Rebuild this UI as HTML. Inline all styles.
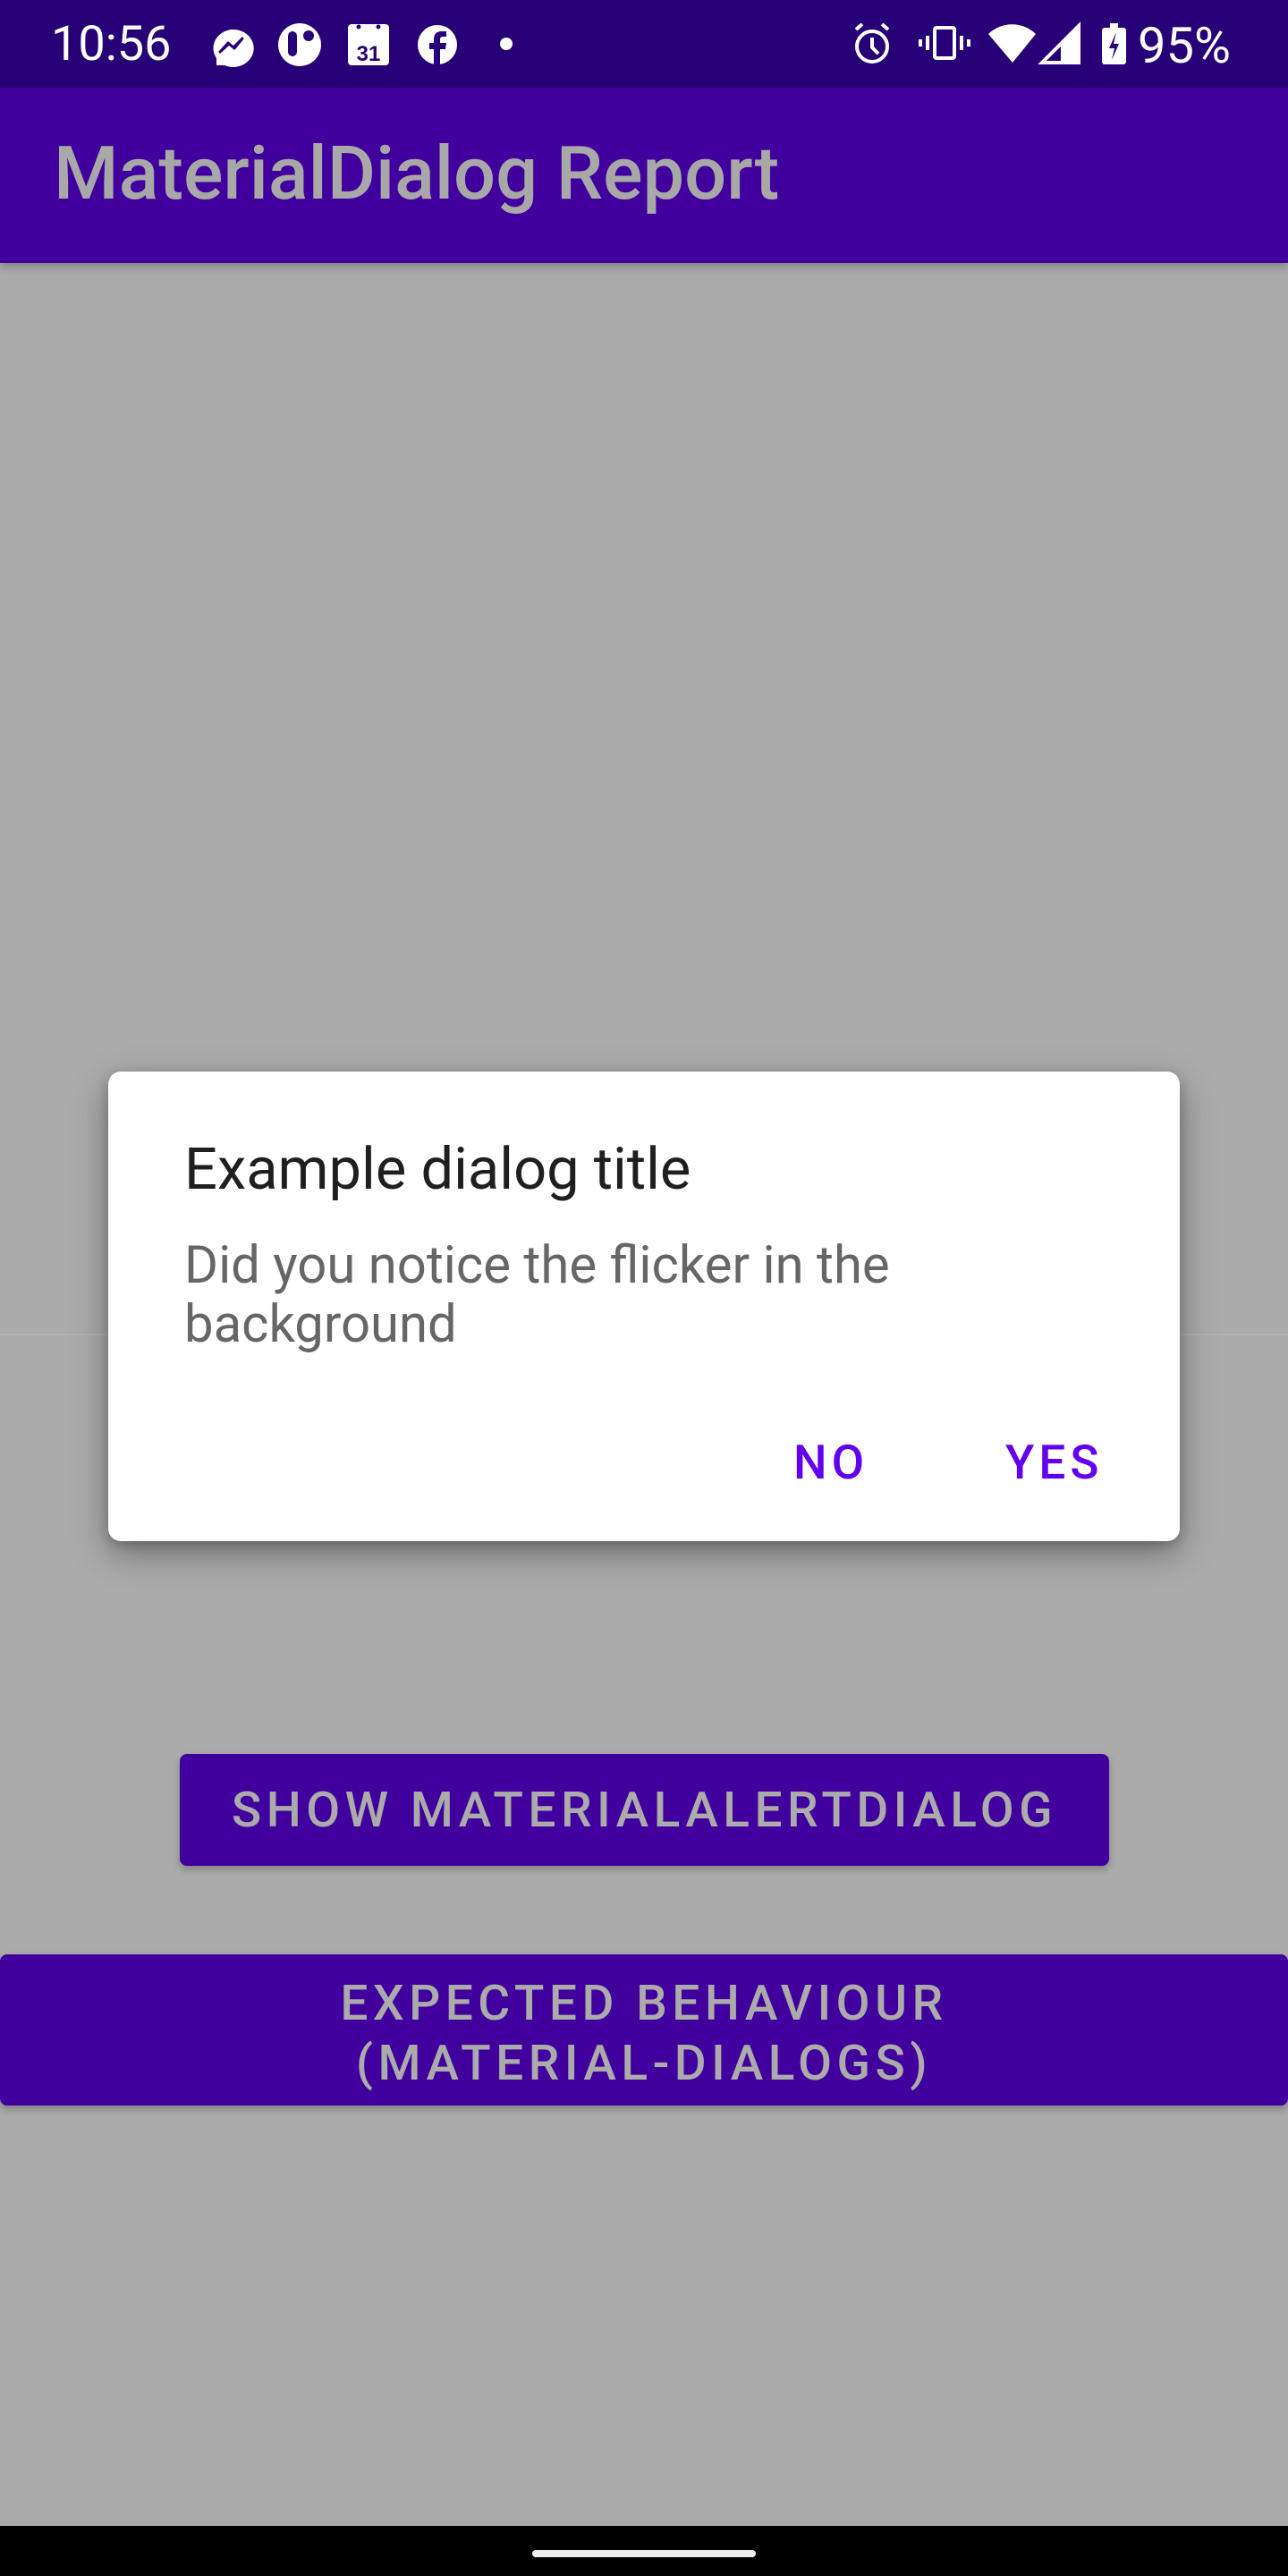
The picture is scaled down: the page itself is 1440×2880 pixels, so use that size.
<!DOCTYPE html>
<html><head><meta charset="utf-8"><style>
*{margin:0;padding:0;box-sizing:border-box}
body{width:1440px;height:2880px;background:#ababab;position:relative;overflow:hidden;font-family:"Roboto","Liberation Sans",sans-serif}
.abs{position:absolute}
#sb{left:0;top:0;width:1440px;height:98px;background:#270077}
#ab{left:0;top:98px;width:1440px;height:196px;background:#41009e;box-shadow:0 4px 10px rgba(0,0,0,.25)}
.t{white-space:nowrap;line-height:1}
#dlg{left:121px;top:1198px;width:1198px;height:525px;background:#fff;border-radius:14px;box-shadow:0 14px 40px rgba(0,0,0,.35),0 4px 12px rgba(0,0,0,.2)}
.btn{background:#41009e}
</style></head><body>
<div id="sb" class="abs"></div>
<div class="abs t" style="left:57px;top:23px;font-size:54px;color:#fff">10:56</div>
<svg class="abs" style="left:0;top:0" width="1440" height="98" viewBox="0 0 1440 98">
 <g fill="#fff">
  <path d="M259 33a23 21 0 1 1 -8 40l-9 0 0-8a23 21 0 0 1 17-32z"/>
  <circle cx="335" cy="50" r="24"/>
  <rect x="389" y="27" width="46" height="46" rx="4"/>
  <circle cx="489" cy="50" r="22"/>
  <circle cx="566" cy="49" r="7"/>
 </g>
 <path d="M246 58l9-10 6 5 10-10-9 11-6-5z" fill="#270077" stroke="#270077" stroke-width="3" stroke-linejoin="round"/>
 <rect x="322" y="35" width="10" height="28" rx="5" fill="#270077"/>
 <circle cx="345" cy="40" r="6" fill="#270077"/>
 <circle cx="401" cy="30" r="2.5" fill="#270077"/><circle cx="423" cy="30" r="2.5" fill="#270077"/>
 <text x="412" y="68" font-size="24" font-weight="bold" fill="#270077" text-anchor="middle" font-family="Liberation Sans">31</text>
 <path d="M492 72V55h6l1-7h-7v-4c0-2 1-3 3-3h4v-6h-5c-6 0-9 3-9 9v4h-5v7h5v17z" fill="#270077"/>
 <g fill="none" stroke="#fff" stroke-width="4">
  <circle cx="975" cy="52" r="17"/><path d="M975 42v11l7 7M957 33l7-6M993 33l-7-6"/>
  <rect x="1045" y="31" width="22" height="34" rx="2"/><path d="M1037 40v16M1029 44v8M1075 40v16M1083 44v8"/>
 </g>
 <path d="M1105 38a38 38 0 0 1 53 0l-26 32z" fill="#fff"/>
 <path d="M1165 70l41-41v41z" fill="none" stroke="#fff" stroke-width="4"/>
 <path d="M1186 48l18-17v37h-18z" fill="#fff"/>
 <rect x="1232" y="31" width="27" height="41" rx="3" fill="#fff"/><rect x="1241" y="26" width="9" height="6" fill="#fff"/>
 <path d="M1248 36l-8 18h6l-3 13 8-18h-6z" fill="#270077"/>
</svg>
<div class="abs t" style="left:1272px;top:23px;font-size:56px;color:#fff">95%</div>
<div id="ab" class="abs"></div>
<div class="abs t" style="left:60px;top:153px;font-size:83px;color:#a8a8a8;font-weight:500">MaterialDialog Report</div>
<div class="abs" style="left:0;top:1491px;width:1440px;height:2px;background:#b2b2b2"></div>
<div id="dlg" class="abs"></div>
<div class="abs t" style="left:206px;top:1275px;font-size:65px;color:#1f1f1f">Example dialog title</div>
<div class="abs t" style="left:206px;top:1382px;font-size:58px;color:#666;line-height:66px">Did you notice the flicker in the<br>background</div>
<div class="abs t" style="left:887px;top:1609px;font-size:53px;color:#6200ee;font-weight:500;letter-spacing:5px">NO</div>
<div class="abs t" style="left:1124px;top:1609px;font-size:53px;color:#6200ee;font-weight:500;letter-spacing:5px">YES</div>
<div class="abs btn" style="left:201px;top:1961px;width:1039px;height:125px;border-radius:8px;box-shadow:0 4px 8px rgba(0,0,0,.25)"></div>
<div class="abs t" style="left:201px;top:1997px;width:1039px;text-align:center;font-size:55px;color:#ababab;letter-spacing:5.5px;font-weight:500">SHOW MATERIALALERTDIALOG</div>
<div class="abs btn" style="left:0;top:2185px;width:1440px;height:169px;border-radius:8px;box-shadow:0 4px 8px rgba(0,0,0,.25)"></div>
<div class="abs t" style="left:0;top:2207px;width:1440px;text-align:center;font-size:55px;color:#ababab;letter-spacing:5.5px;font-weight:500;line-height:67px">EXPECTED BEHAVIOUR<br>(MATERIAL-DIALOGS)</div>
<div class="abs" style="left:0;top:2824px;width:1440px;height:56px;background:#000"></div>
<div class="abs" style="left:595px;top:2851px;width:250px;height:8px;border-radius:4px;background:#eee"></div>
</body></html>
